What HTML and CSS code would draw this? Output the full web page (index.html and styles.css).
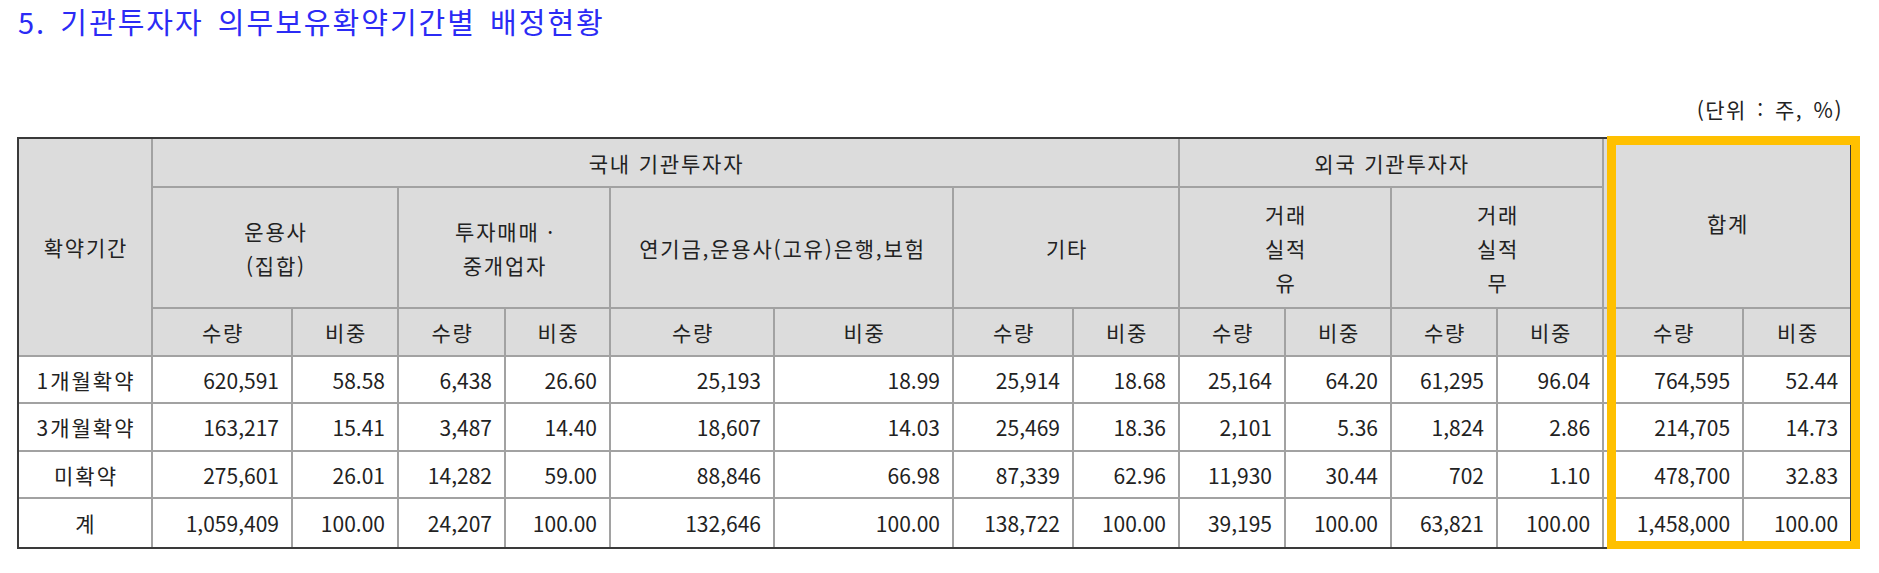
FILE: index.html
```html
<!DOCTYPE html>
<html lang="ko">
<head>
<meta charset="utf-8">
<title>기관투자자 의무보유확약기간별 배정현황</title>
<link rel="stylesheet" href="styles.css">
</head>
<body>
<div class="page">
  <h1 class="title">5. 기관투자자 의무보유확약기간별 배정현황</h1>
  <div class="unit">(단위 : 주, %)</div>
  <div class="table-wrap">
    <table class="grid">
      <colgroup>
        <col class="c134"><col class="c140"><col class="c106"><col class="c107"><col class="c105">
        <col class="c164"><col class="c179"><col class="c120"><col class="c106"><col class="c106">
        <col class="c106"><col class="c106"><col class="c106"><col class="c140"><col class="c106">
      </colgroup>
      <thead>
        <tr class="h1">
          <th rowspan="3">확약기간</th>
          <th colspan="8">국내 기관투자자</th>
          <th colspan="4">외국 기관투자자</th>
          <th rowspan="2" colspan="2" class="r">합계</th>
        </tr>
        <tr class="h2">
          <th colspan="2">운용사<br>(집합)</th>
          <th colspan="2">투자매매 ·<br>중개업자</th>
          <th colspan="2">연기금,운용사(고유)은행,보험</th>
          <th colspan="2">기타</th>
          <th colspan="2">거래<br>실적<br>유</th>
          <th colspan="2">거래<br>실적<br>무</th>
        </tr>
        <tr class="h3">
          <th>수량</th><th>비중</th>
          <th>수량</th><th>비중</th>
          <th>수량</th><th>비중</th>
          <th>수량</th><th>비중</th>
          <th>수량</th><th>비중</th>
          <th>수량</th><th>비중</th>
          <th>수량</th><th class="r">비중</th>
        </tr>
      </thead>
      <tbody>
        <tr class="d47">
          <td class="lbl">1개월확약</td>
          <td>620,591</td><td>58.58</td>
          <td>6,438</td><td>26.60</td>
          <td>25,193</td><td>18.99</td>
          <td>25,914</td><td>18.68</td>
          <td>25,164</td><td>64.20</td>
          <td>61,295</td><td>96.04</td>
          <td>764,595</td><td class="r">52.44</td>
        </tr>
        <tr class="d48">
          <td class="lbl">3개월확약</td>
          <td>163,217</td><td>15.41</td>
          <td>3,487</td><td>14.40</td>
          <td>18,607</td><td>14.03</td>
          <td>25,469</td><td>18.36</td>
          <td>2,101</td><td>5.36</td>
          <td>1,824</td><td>2.86</td>
          <td>214,705</td><td class="r">14.73</td>
        </tr>
        <tr class="d47">
          <td class="lbl">미확약</td>
          <td>275,601</td><td>26.01</td>
          <td>14,282</td><td>59.00</td>
          <td>88,846</td><td>66.98</td>
          <td>87,339</td><td>62.96</td>
          <td>11,930</td><td>30.44</td>
          <td>702</td><td>1.10</td>
          <td>478,700</td><td class="r">32.83</td>
        </tr>
        <tr class="d48 last">
          <td class="lbl">계</td>
          <td>1,059,409</td><td>100.00</td>
          <td>24,207</td><td>100.00</td>
          <td>132,646</td><td>100.00</td>
          <td>138,722</td><td>100.00</td>
          <td>39,195</td><td>100.00</td>
          <td>63,821</td><td>100.00</td>
          <td>1,458,000</td><td class="r">100.00</td>
        </tr>
      </tbody>
    </table>
    <div class="highlight"></div>
  </div>
</div>
</body>
</html>
```

FILE: styles.css
```css
* { box-sizing: border-box; }

html, body {
  margin: 0;
  padding: 0;
  background: #ffffff;
}

body {
  font-family: "Noto Sans CJK KR", "Noto Sans", sans-serif;
  color: #222222;
}

.page {
  padding: 0 0 0 17px;
  width: 1879px;
}

.title {
  margin: 0;
  padding: 1px 0 0 1px;
  height: 44px;
  font-size: 29px;
  line-height: 40px;
  font-weight: 400;
  color: #2b2bf5;
  letter-spacing: 2px;
  word-spacing: 4px;
}

.unit {
  margin-top: 46px;
  width: 1835px;
  padding-right: 9px;
  text-align: right;
  font-size: 21px;
  line-height: 38px;
  height: 47px;
  color: #222222;
  letter-spacing: 1.5px;
  word-spacing: 3px;
}

.table-wrap {
  position: relative;
  width: 1835px;
}

.grid {
  table-layout: fixed;
  border-collapse: separate;
  border-spacing: 0;
  width: 1835px;
  border: 2px solid #3a3a3a;
  font-size: 21px;
}

.c134 { width: 134px; }
.c140 { width: 140px; }
.c106 { width: 106px; }
.c107 { width: 107px; }
.c105 { width: 105px; }
.c164 { width: 164px; }
.c179 { width: 179px; }
.c120 { width: 120px; }

.grid th,
.grid td {
  border-right: 2px solid #a2a2a2;
  border-bottom: 2px solid #a2a2a2;
  padding: 0;
  overflow: hidden;
  white-space: nowrap;
}

.grid th {
  background: #dcdcdc;
  font-weight: 400;
  text-align: center;
  line-height: 34px;
  letter-spacing: 1.8px;
  padding-left: 2px;
}

.grid td {
  background: #ffffff;
  text-align: right;
  padding-right: 12px;
  line-height: 30px;
}

.grid td.lbl {
  text-align: center;
  padding-right: 0;
  padding-left: 2px;
  letter-spacing: 2px;
}

.grid .r { border-right: none; }
.grid tr.last td { border-bottom: none; }

.h1 { height: 49px; }
.h2 { height: 121px; }
.h3 { height: 48px; }
.d47 { height: 47px; }
.d48 { height: 48px; }

.highlight {
  position: absolute;
  top: -1px;
  right: -8px;
  bottom: -1px;
  width: 253px;
  border: 9px solid #ffc000;
  pointer-events: none;
}
```
